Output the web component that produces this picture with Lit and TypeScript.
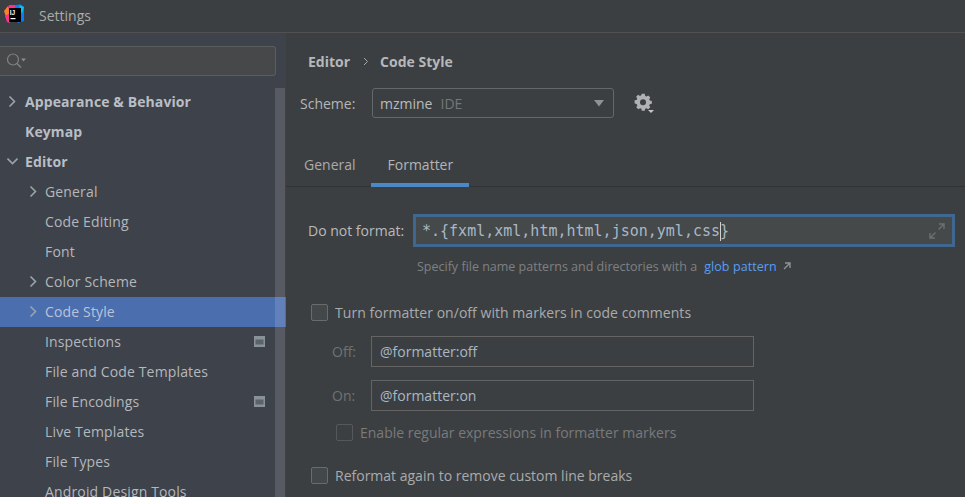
import { LitElement, html, css, svg } from 'lit';
import { customElement } from 'lit/decorators.js';

interface NavItem {
  label: string;
  depth: number;
  arrow?: 'right' | 'down';
  bold?: boolean;
  selected?: boolean;
  badge?: boolean;
}

const NAV: NavItem[] = [
  { label: 'Appearance & Behavior', depth: 0, arrow: 'right', bold: true },
  { label: 'Keymap', depth: 0, bold: true },
  { label: 'Editor', depth: 0, arrow: 'down', bold: true },
  { label: 'General', depth: 1, arrow: 'right' },
  { label: 'Code Editing', depth: 1 },
  { label: 'Font', depth: 1 },
  { label: 'Color Scheme', depth: 1, arrow: 'right' },
  { label: 'Code Style', depth: 1, arrow: 'right', selected: true },
  { label: 'Inspections', depth: 1, badge: true },
  { label: 'File and Code Templates', depth: 1 },
  { label: 'File Encodings', depth: 1, badge: true },
  { label: 'Live Templates', depth: 1 },
  { label: 'File Types', depth: 1 },
  { label: 'Android Design Tools', depth: 1 },
];

const arrowRight = svg`<path d="M2.5 1.5 7.5 6.5 2.5 11.5" fill="none" stroke="#9ba3ab" stroke-width="1.6"/>`;
const arrowDown = svg`<path d="M0.5 3.5 5.5 8.5 10.5 3.5" fill="none" stroke="#9ba3ab" stroke-width="1.6"/>`;

@customElement('app-root')
export class AppRoot extends LitElement {
  static styles = css`
    :host {
      display: block;
      width: 965px;
      height: 497px;
      overflow: hidden;
      background: #3c3f41;
      color: #bbbbbb;
      font-family: 'Open Sans', 'Noto Sans', sans-serif;
      font-size: 14px;
    }
    .title {
      height: 32px;
      box-sizing: content-box;
      border-bottom: 1px solid #515151;
      display: flex;
      align-items: center;
      padding-left: 4px;
      gap: 15px;
    }
    .title svg { margin-top: -4px; }
    .title span { font-size: 14px; color: #a9acae; margin-top: -2px; }
    .body { display: flex; height: 464px; }

    .side {
      position: relative;
      width: 286px;
      flex: none;
      background: #3e424b;
      overflow: hidden;
    }
    .search {
      margin: 13px 0 11px;
      width: 276px;
      height: 30px;
      box-sizing: border-box;
      background: #46484a;
      border: 1px solid #5a5d5e;
      border-left: none;
      border-radius: 0 3px 3px 0;
      display: flex;
      align-items: center;
      padding-left: 6px;
    }
    .row {
      height: 30px;
      box-sizing: border-box;
      padding-bottom: 2px;
      display: flex;
      align-items: center;
      position: relative;
      color: #b4b8bc;
      white-space: nowrap;
      letter-spacing: 0.15px;
    }
    .row.bold { font-weight: 700; color: #b9bec4; letter-spacing: 0.1px; }
    .row.selected { background: #4b6eaf; color: #bbc4d6; }
    .row .arrow { position: absolute; top: 8px; }
    .row.d0 { padding-left: 25px; }
    .row.d1 { padding-left: 45px; }
    .row.d0 .arrow { left: 7px; }
    .row.d1 .arrow { left: 28px; }
    .row .badge { position: absolute; left: 254px; top: 9px; }
    .thumb {
      position: absolute;
      left: 275px;
      top: 55px;
      width: 10px;
      height: 409px;
      background: rgba(255, 255, 255, 0.13);
    }

    .main { flex: 1; padding-left: 22px; position: relative; min-width: 0; }
    .crumbs {
      display: flex;
      align-items: center;
      height: 20px;
      margin-top: 18px;
      font-weight: 700;
      color: #b5b8ba;
      font-size: 14px;
    }
    .crumbs svg { margin: 0 11px 0 13px; }
    .scheme {
      display: flex;
      align-items: center;
      margin: 17px 0 0 -8px;
      height: 30px;
    }
    .scheme label { width: 72px; color: #b4b6b8; }
    .combo {
      width: 242px;
      height: 30px;
      box-sizing: border-box;
      border: 1px solid #64686a;
      border-radius: 3px;
      background: #3c3f41;
      display: flex;
      align-items: center;
      padding: 0 8px 0 7px;
      gap: 8px;
    }
    .combo .dim { color: #74787a; }
    .combo svg { margin-left: auto; }
    .gear { margin: 4px 0 0 20px; width: 22px; height: 24px; }
    .tabs {
      display: flex;
      height: 38px;
      margin: 30px 0 0 -22px;
      padding-left: 2px;
      border-bottom: 1px solid #323232;
      box-sizing: content-box;
    }
    .tab {
      height: 38px;
      box-sizing: border-box;
      padding: 7px 16px 0;
      color: #a9abad;
    }
    .tab.on {
      margin-left: -1px;
      width: 98px;
      padding: 7px 0 0 17px;
      color: #b3b5b7;
      border-bottom: 4px solid #4a88c7;
      height: 39px;
    }
    .fmt {
      display: flex;
      align-items: center;
      margin-top: 27px;
      height: 33px;
    }
    .fmt label { width: 105px; color: #b8babc; }
    .fmt-input {
      position: relative;
      width: 542px;
      height: 33px;
      box-sizing: border-box;
      border: 3px solid #40678f;
      background: #45494a;
      display: flex;
      align-items: center;
      padding: 2px 0 0 6px;
      font-family: 'DejaVu Sans Mono', 'Liberation Mono', monospace;
      font-size: 15px;
      color: #a9b7c6;
    }
    .caret { display: inline-block; width: 1px; height: 19px; background: #d0d0d0; margin: 0 -1px 0 0; vertical-align: middle; }
    .fmt-input svg { position: absolute; right: 7px; top: 6px; }
    .hint {
      margin: 9px 0 0 109px;
      height: 20px;
      font-size: 12.5px;
      color: #7e8183;
      display: flex;
      align-items: center;
      gap: 7px;
    }
    .hint a { color: #589df6; text-decoration: none; letter-spacing: 0.08px; }
    .hint svg { margin-left: -1px; }
    .check {
      display: flex;
      align-items: center;
      height: 20px;
      gap: 7px;
      color: #a9abad;
    }
    .check i {
      width: 17px;
      height: 17px;
      box-sizing: border-box;
      border: 1px solid #6b6b6b;
      border-radius: 2px;
      background: #43494a;
      flex: none;
    }
    .check.first { margin: 26px 0 0 3px; letter-spacing: 0.04px; }
    .check.sub { margin: 11px 0 0 28px; color: #787a7c; }
    .check.sub i { border-color: #565859; background: #3c3f41; }
    .check.last { margin: 23px 0 0 3px; }
    .field {
      display: flex;
      align-items: center;
      height: 31px;
      margin: 14px 0 0 24px;
      color: #6f7274;
    }
    .field + .field { margin-top: 13px; }
    .field label { width: 39px; }
    .field div {
      width: 383px;
      height: 31px;
      box-sizing: border-box;
      border: 1px solid #646464;
      background: #3c3f41;
      color: #a9b7c6;
      padding: 0 7px 0 8px;
      display: flex;
      align-items: center;
    }
  `;

  private navRow(n: NavItem) {
    const cls = `row d${n.depth}${n.bold ? ' bold' : ''}${n.selected ? ' selected' : ''}`;
    return html`<div class=${cls}>
      ${n.arrow
        ? html`<svg class="arrow" width="11" height="13" viewBox="0 0 11 13">
            ${n.arrow === 'right' ? arrowRight : arrowDown}
          </svg>`
        : ''}
      ${n.label}
      ${n.badge
        ? html`<svg class="badge" width="11" height="11" viewBox="0 0 11 11">
            <rect width="11" height="11" fill="#8a9299" />
            <rect x="1.5" y="3.5" width="8" height="5" fill="#5b6268" />
          </svg>`
        : ''}
    </div>`;
  }

  render() {
    return html`
      <div class="title">
        <svg width="20" height="20" viewBox="0 0 20 20">
          <path d="M5 1 14 1 11 9 3 6Z" fill="#fc318c" />
          <path d="M11 1 17 0.5 20 3 20 17 14 19Z" fill="#087cfa" />
          <path d="M15 1 20 3 18 10Z" fill="#07c3f2" />
          <path d="M0 7 4 2 6 12 2 13Z" fill="#fe7e2b" />
          <path d="M1 12 6 9 6 19 3 18Z" fill="#fc318c" />
          <rect x="5" y="4" width="12" height="14" fill="#000" />
          <text x="5.8" y="10.5" font-size="6.5" font-weight="700" fill="#fff" font-family="Liberation Sans">IJ</text>
          <rect x="6.5" y="14" width="5" height="1.2" fill="#fff" />
        </svg>
        <span>Settings</span>
      </div>
      <div class="body">
        <div class="side">
          <div class="search">
            <svg width="20" height="18" viewBox="0 0 20 18">
              <circle cx="7" cy="7.5" r="5.5" fill="none" stroke="#7f8486" stroke-width="1.2" />
              <path d="M11 11.5 15 15.5" stroke="#7f8486" stroke-width="1.4" />
              <path d="M15 6.5h5l-2.5 3z" fill="#8a8d8f" />
            </svg>
          </div>
          ${NAV.map((n) => this.navRow(n))}
          <div class="thumb"></div>
        </div>
        <div class="main">
          <div class="crumbs">
            <span>Editor</span>
            <svg width="6" height="9" viewBox="0 0 6 9">
              <path d="M1 1 4.5 4.5 1 8" fill="none" stroke="#a5a8aa" stroke-width="1" />
            </svg>
            <span>Code Style</span>
          </div>
          <div class="scheme">
            <label>Scheme:</label>
            <div class="combo">
              <span>mzmine</span><span class="dim">IDE</span>
              <svg width="12" height="7" viewBox="0 0 12 7"><path d="M1 0h10L6 6.5z" fill="#8f9294" /></svg>
            </div>
            <svg class="gear" viewBox="0 0 22 24">
              <path
                d="M8 1h3.5l.5 2.4 1.5.7 2.1-1.3 2.4 2.4-1.3 2.1.7 1.5 2.4.5v3.4l-2.4.5-.7 1.5 1.3 2.1-2.4 2.4-2.1-1.3-1.5.7-.5 2.4H8l-.5-2.4-1.5-.7-2.1 1.3-2.4-2.4 1.3-2.1-.7-1.5L-.5 12V8.6l2.4-.5.7-1.5-1.3-2.1 2.4-2.4 2.1 1.3 1.5-.7z"
                fill="#afb1b3"
                transform="translate(1 0) scale(.85)"
              />
              <circle cx="9" cy="9.2" r="3" fill="#3c3f41" />
              <path d="M14 17h6l-3 3z" fill="#c4c6c8" />
            </svg>
          </div>
          <div class="tabs">
            <div class="tab">General</div>
            <div class="tab on">Formatter</div>
          </div>
          <div class="fmt">
            <label>Do not format:</label>
            <div class="fmt-input">
              <span>*.{fxml,xml,htm,html,json,yml,css<span class="caret"></span>}</span>
              <svg width="16" height="16" viewBox="0 0 16 16">
                <path d="M9.5 6.5 15 1M10 1h5v5M1 15l5.5-5.5M1 10v5h5" fill="none" stroke="#6c7072" stroke-width="1.4" />
              </svg>
            </div>
          </div>
          <div class="hint">
            <span>Specify file name patterns and directories with a</span>
            <a>glob pattern</a>
            <svg width="8" height="8" viewBox="0 0 8 8">
              <path d="M1 7 6.5 1.5M2 1h5v5" fill="none" stroke="#8f9294" stroke-width="1.4" />
            </svg>
          </div>
          <div class="check first"><i></i><span>Turn formatter on/off with markers in code comments</span></div>
          <div class="field"><label>Off:</label><div>@formatter:off</div></div>
          <div class="field"><label>On:</label><div>@formatter:on</div></div>
          <div class="check sub"><i></i><span>Enable regular expressions in formatter markers</span></div>
          <div class="check last"><i></i><span>Reformat again to remove custom line breaks</span></div>
        </div>
      </div>
    `;
  }
}
